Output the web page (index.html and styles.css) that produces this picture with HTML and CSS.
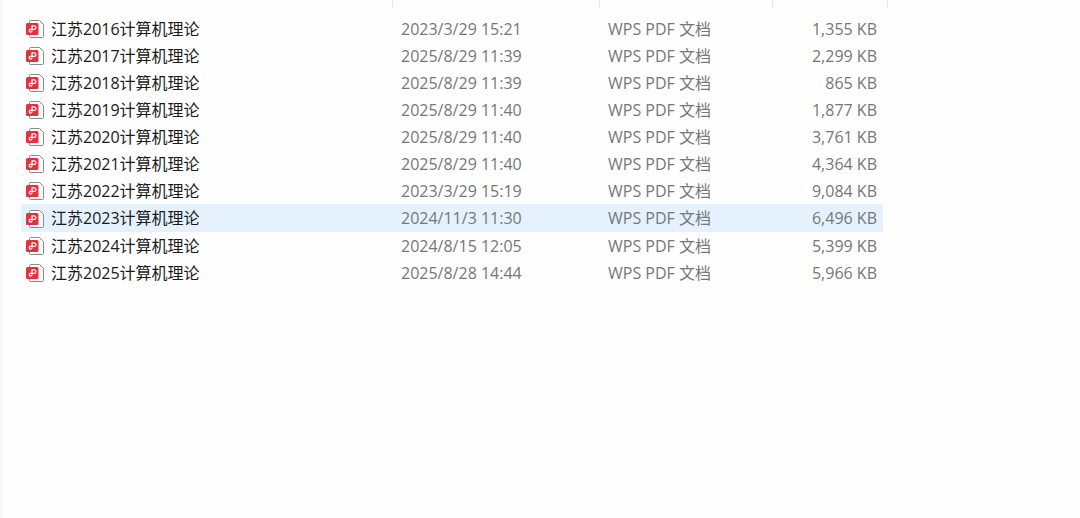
FILE: index.html
```
<!DOCTYPE html>
<html lang="zh-CN">
<head>
    <meta charset="UTF-8">
    <meta name="viewport" content="width=device-width, initial-scale=1.0">
    <title>文件列表</title>
    <link rel="stylesheet" href="styles.css">
</head>
<body>

<!-- 文件图标 -->
<svg class="symbols" aria-hidden="true">
    <symbol id="pdf" viewBox="0 0 18 20">
        <path d="M3.5 2.500a1 1 0 0 1 1-1H13.500l4 4v12a1 1 0 0 1-1 1h-12a1 1 0 0 1-1-1z" fill="#fff" stroke="#8a8a8a"/>
        <rect x="0" y="4" width="12.500" height="12" rx="1.500" fill="#e5303e"/>
        <path d="M6 11.500V6.900h2.200a1.700 1.700 0 0 1 0 3.500H4a1.400 1.400 0 1 0 2 1.300" fill="none" stroke="#fff" stroke-width="1.200" stroke-linejoin="round"/>
    </symbol>
</svg>

<main class="pane">
    <!-- 列分隔线 -->
    <div class="columns">
        <span class="name"></span>
        <span class="date"></span>
        <span class="type"></span>
        <span class="size"></span>
    </div>

    <!-- 文件列表 -->
    <table class="files">
        <tbody>
            <tr><td class="name"><svg class="icon"><use href="#pdf"/></svg>江苏2016计算机理论</td><td class="date">2023/3/29 15:21</td><td class="type">WPS PDF 文档</td><td class="size">1,355 KB</td></tr>
            <tr><td class="name"><svg class="icon"><use href="#pdf"/></svg>江苏2017计算机理论</td><td class="date">2025/8/29 11:39</td><td class="type">WPS PDF 文档</td><td class="size">2,299 KB</td></tr>
            <tr><td class="name"><svg class="icon"><use href="#pdf"/></svg>江苏2018计算机理论</td><td class="date">2025/8/29 11:39</td><td class="type">WPS PDF 文档</td><td class="size">865 KB</td></tr>
            <tr><td class="name"><svg class="icon"><use href="#pdf"/></svg>江苏2019计算机理论</td><td class="date">2025/8/29 11:40</td><td class="type">WPS PDF 文档</td><td class="size">1,877 KB</td></tr>
            <tr><td class="name"><svg class="icon"><use href="#pdf"/></svg>江苏2020计算机理论</td><td class="date">2025/8/29 11:40</td><td class="type">WPS PDF 文档</td><td class="size">3,761 KB</td></tr>
            <tr><td class="name"><svg class="icon"><use href="#pdf"/></svg>江苏2021计算机理论</td><td class="date">2025/8/29 11:40</td><td class="type">WPS PDF 文档</td><td class="size">4,364 KB</td></tr>
            <tr><td class="name"><svg class="icon"><use href="#pdf"/></svg>江苏2022计算机理论</td><td class="date">2023/3/29 15:19</td><td class="type">WPS PDF 文档</td><td class="size">9,084 KB</td></tr>
            <tr class="active"><td class="name"><svg class="icon"><use href="#pdf"/></svg>江苏2023计算机理论</td><td class="date">2024/11/3 11:30</td><td class="type">WPS PDF 文档</td><td class="size">6,496 KB</td></tr>
            <tr><td class="name"><svg class="icon"><use href="#pdf"/></svg>江苏2024计算机理论</td><td class="date">2024/8/15 12:05</td><td class="type">WPS PDF 文档</td><td class="size">5,399 KB</td></tr>
            <tr><td class="name"><svg class="icon"><use href="#pdf"/></svg>江苏2025计算机理论</td><td class="date">2025/8/28 14:44</td><td class="type">WPS PDF 文档</td><td class="size">5,966 KB</td></tr>
        </tbody>
    </table>
</main>

</body>
</html>
```
FILE: styles.css
```
* {
    margin: 0;
    padding: 0;
    box-sizing: border-box;
}

body {
    background-color: #fefefe;
    color: #1a1a1a;
    font-family: "Open Sans", "Noto Sans CJK SC", sans-serif;
    font-size: 16px;
    line-height: 26px;
}

.symbols {
    display: none;
}

.pane {
    min-height: 100vh;
    padding: 0 20px 20px 19px;
    border-left: 2px solid #f8f8f8;
}

/* 列宽 */
.name {
    width: 372px;
}

.date {
    width: 207px;
}

.type {
    width: 173px;
}

.size {
    width: 110px;
}

/* 列分隔线 */
.columns {
    display: flex;
    height: 7px;
    margin-bottom: 8px;
}

.columns span {
    border-right: 1px solid #e5e5e5;
}

.columns .size {
    width: 115px;
}

/* 文件列表 */
.files {
    border-collapse: collapse;
    table-layout: fixed;
    width: 862px;
    max-width: 100%;
}

.files tr {
    height: 27px;
}

.files td {
    padding-left: 8px;
    color: #777;
    white-space: nowrap;
}

.files .name {
    padding-left: 5px;
    color: #1a1a1a;
}

.files .size {
    padding-right: 6px;
    text-align: right;
}

.files .active {
    height: 28px;
    background-color: #e5f2fd;
}

.icon {
    width: 18px;
    height: 20px;
    margin: 0 7px 2px 0;
    vertical-align: middle;
}
```
